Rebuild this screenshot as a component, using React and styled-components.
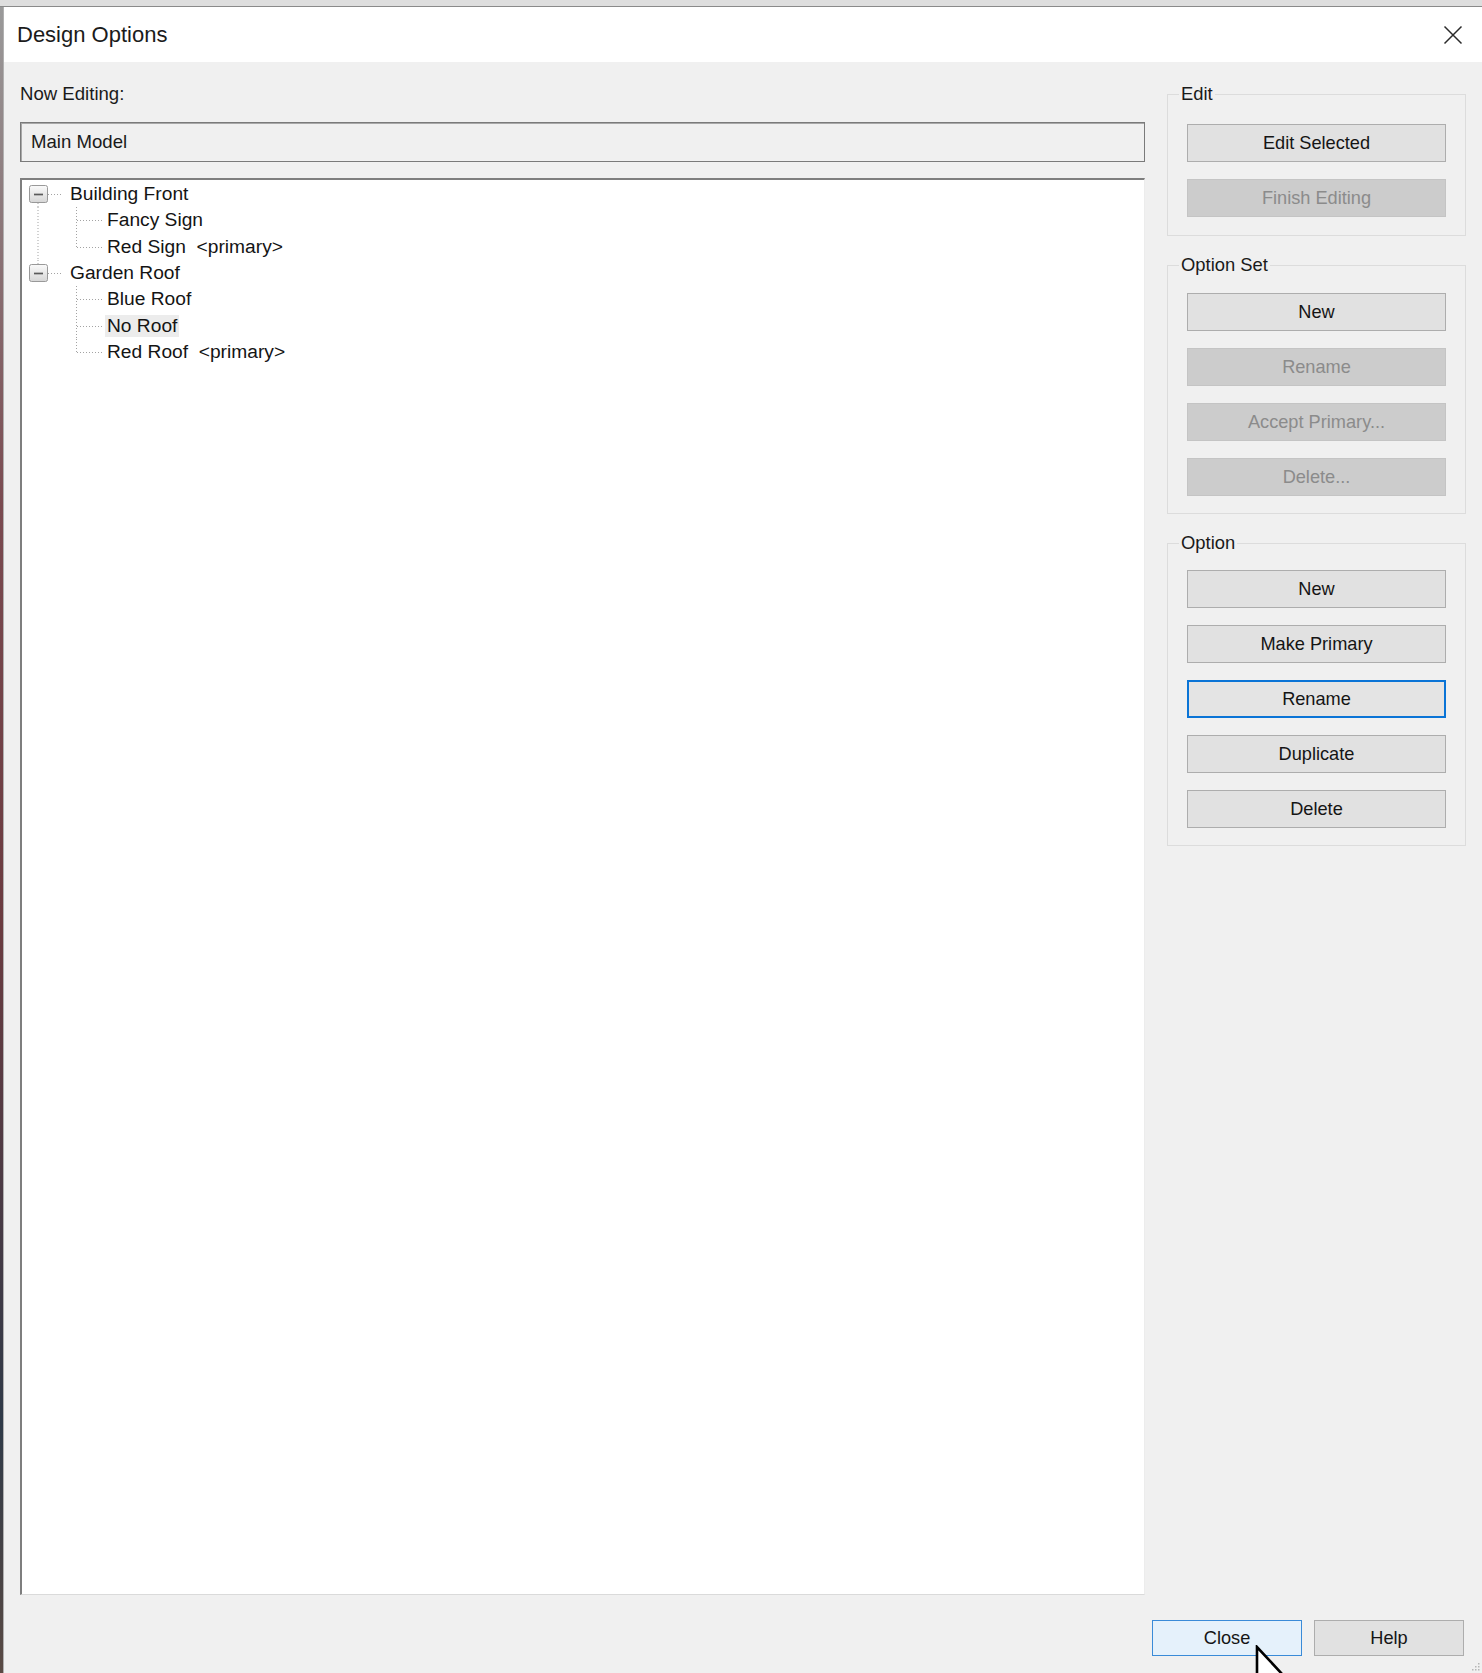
import React from "react";
import styled, { createGlobalStyle, css } from "styled-components";

const Global = createGlobalStyle`
  html, body { margin: 0; padding: 0; height: 100%; overflow: hidden; }
  body { font-family: "Segoe UI", "Liberation Sans", Arial, sans-serif; color: #111; }
  #root { height: 100%; }
`;

const Page = styled.div`
  position: relative;
  height: 100vh;
  display: flex;
  flex-direction: column;
  background: #dcdcdc;
  overflow: hidden;
`;

const TopStrip = styled.div`
  height: 6px;
  flex-shrink: 0;
  background: #dedede;
  border-bottom: 1px solid #8a8a8a;
`;

const Desk = styled.div`
  flex: 1;
  min-height: 0;
  display: flex;
`;

const LeftStrip = styled.div`
  width: 3px;
  flex-shrink: 0;
  background: linear-gradient(#9a9a9a 0%, #7a4a50 30%, #6b3b40 55%, #2f3a48 85%, #5a4a44 100%);
`;

const Window = styled.div`
  position: relative;
  flex: 1;
  min-width: 0;
  display: flex;
  flex-direction: column;
  background: #f0f0f0;
  border-left: 1px solid #b0b0b0;
`;

const TitleBar = styled.div`
  height: 55px;
  flex-shrink: 0;
  background: #fff;
  display: flex;
  align-items: center;
  justify-content: space-between;
  padding: 0 19px 0 13px;
`;

const Title = styled.div`
  font-size: 22px;
  color: #1b1b1b;
`;

const Body = styled.div`
  flex: 1;
  min-height: 0;
  display: grid;
  grid-template-columns: 1125px 299px;
  column-gap: 22px;
  padding: 21px 15px 0 16px;
`;

const LeftCol = styled.div`
  display: flex;
  flex-direction: column;
  min-height: 0;
`;

const FieldLabel = styled.div`
  font-size: 18.6px;
  line-height: 22px;
  color: #1a1a1a;
`;

const ReadOnlyBox = styled.div`
  margin-top: 17px;
  height: 40px;
  box-sizing: border-box;
  display: flex;
  align-items: center;
  padding-left: 10px;
  font-size: 18.6px;
  color: #1a1a1a;
  background: #f0f0f0;
  border: 1px solid #7a7a7a;
  box-shadow: inset 1px 1px 0 #a8a8a8;
`;

const TreeBox = styled.div`
  margin-top: 16px;
  flex: 1;
  min-height: 0;
  padding-top: 1px;
  background: #fff;
  border-top: 2px solid #7e7e7e;
  border-left: 2px solid #7e7e7e;
  border-right: 1px solid #ececec;
  border-bottom: 1px solid #dadada;
`;

const TreeRow = styled.div`
  height: 26.3px;
  display: flex;
  align-items: center;
`;

const Connector = styled.svg`
  flex-shrink: 0;
  display: block;
`;

const TreeLabel = styled.span`
  font-size: 19.2px;
  line-height: 22px;
  white-space: pre;
  color: #141414;
  padding: 0 2px;
  margin-left: -2px;
  background: ${(p) => (p.$selected ? "#ececec" : "transparent")};
`;

const RightCol = styled.div`
  display: flex;
  flex-direction: column;
  gap: 18px;
`;

const Group = styled.fieldset`
  margin: 0;
  min-width: 0;
  padding: ${(p) => p.$pt}px 19px ${(p) => p.$pb}px 19px;
  border: 1px solid #dcdcdc;
  display: flex;
  flex-direction: column;
  gap: 17px;
`;

const Legend = styled.legend`
  padding: 0 2px;
  margin-left: -8px;
  font-size: 18.4px;
  line-height: 22px;
  color: #1a1a1a;
`;

const Button = styled.button`
  height: 38px;
  box-sizing: border-box;
  padding: 0;
  font-family: inherit;
  font-size: 18.2px;
  color: #151515;
  background: #e1e1e1;
  border: 1px solid #adadad;
  ${(p) =>
    p.$disabled &&
    css`
      background: #cccccc;
      border-color: #c4c4c4;
      color: #8b8b8b;
    `}
  ${(p) =>
    p.$focused &&
    css`
      border: 2px solid #0a74d6;
      background: #e4e4e4;
    `}
  ${(p) =>
    p.$hover &&
    css`
      background: #e5f1fb;
      border-color: #3a8bd8;
    `}
`;

const Footer = styled.div`
  flex-shrink: 0;
  display: flex;
  justify-content: flex-end;
  gap: 12px;
  padding: 25px 18px 17px 0;
`;

const FooterButton = styled(Button)`
  width: 150px;
  height: 36px;
`;

const Grip = styled.svg`
  position: absolute;
  right: 1px;
  bottom: 1px;
`;

const Cursor = styled.svg`
  position: absolute;
  left: 1255px;
  top: 1645px;
`;

const DOT = { stroke: "#a3a3a3", strokeWidth: 1, strokeDasharray: "1 2" };

function RootConnector({ hasPrev, hasNext }) {
  return (
    <Connector width="48" height="26" viewBox="0 0 48 26">
      {hasPrev && <line x1="16" y1="0" x2="16" y2="4" {...DOT} />}
      {hasNext && <line x1="16" y1="22" x2="16" y2="26" {...DOT} />}
      <line x1="26" y1="13.5" x2="41" y2="13.5" {...DOT} />
      <defs>
        <linearGradient id="boxg" x1="0" y1="0" x2="0" y2="1">
          <stop offset="0" stopColor="#fafafa" />
          <stop offset="1" stopColor="#d6d6d6" />
        </linearGradient>
      </defs>
      <rect x="7.5" y="4.5" width="18" height="17" rx="2" fill="url(#boxg)" stroke="#999" />
      <line x1="12" y1="13.5" x2="21" y2="13.5" stroke="#5a5a5a" strokeWidth="1.7" />
    </Connector>
  );
}

function ChildConnector({ parentHasNext, last }) {
  return (
    <Connector width="85" height="26" viewBox="0 0 85 26">
      {parentHasNext && <line x1="16" y1="0" x2="16" y2="26.5" {...DOT} />}
      <line x1="54.5" y1="0" x2="54.5" y2={last ? 13.5 : 26.5} {...DOT} />
      <line x1="55" y1="13.5" x2="80" y2="13.5" {...DOT} />
    </Connector>
  );
}

const tree = [
  {
    name: "Building Front",
    children: [{ name: "Fancy Sign" }, { name: "Red Sign  <primary>" }],
  },
  {
    name: "Garden Roof",
    children: [
      { name: "Blue Roof" },
      { name: "No Roof", selected: true },
      { name: "Red Roof  <primary>" },
    ],
  },
];

const groups = [
  {
    title: "Edit",
    pt: 19,
    pb: 18,
    buttons: [{ label: "Edit Selected" }, { label: "Finish Editing", disabled: true }],
  },
  {
    title: "Option Set",
    pt: 17,
    pb: 17,
    buttons: [
      { label: "New" },
      { label: "Rename", disabled: true },
      { label: "Accept Primary...", disabled: true },
      { label: "Delete...", disabled: true },
    ],
  },
  {
    title: "Option",
    pt: 16,
    pb: 17,
    buttons: [
      { label: "New" },
      { label: "Make Primary" },
      { label: "Rename", focused: true },
      { label: "Duplicate" },
      { label: "Delete" },
    ],
  },
];

export default function App() {
  return (
    <>
      <Global />
      <Page>
        <TopStrip />
        <Desk>
          <LeftStrip />
          <Window>
            <TitleBar>
              <Title>Design Options</Title>
              <svg width="20" height="20" viewBox="0 0 20 20">
                <path d="M1.5 1.5 L18.5 18.5 M18.5 1.5 L1.5 18.5" stroke="#2a2a2a" strokeWidth="1.5" />
              </svg>
            </TitleBar>
            <Body>
              <LeftCol>
                <FieldLabel>Now Editing:</FieldLabel>
                <ReadOnlyBox>Main Model</ReadOnlyBox>
                <TreeBox>
                  {tree.map((node, i) => (
                    <React.Fragment key={node.name}>
                      <TreeRow>
                        <RootConnector hasPrev={i > 0} hasNext={i < tree.length - 1} />
                        <TreeLabel>{node.name}</TreeLabel>
                      </TreeRow>
                      {node.children.map((c, j) => (
                        <TreeRow key={c.name}>
                          <ChildConnector
                            parentHasNext={i < tree.length - 1}
                            last={j === node.children.length - 1}
                          />
                          <TreeLabel $selected={c.selected}>{c.name}</TreeLabel>
                        </TreeRow>
                      ))}
                    </React.Fragment>
                  ))}
                </TreeBox>
              </LeftCol>
              <RightCol>
                {groups.map((g) => (
                  <Group key={g.title} $pt={g.pt} $pb={g.pb}>
                    <Legend>{g.title}</Legend>
                    {g.buttons.map((b) => (
                      <Button key={b.label} $disabled={b.disabled} $focused={b.focused}>
                        {b.label}
                      </Button>
                    ))}
                  </Group>
                ))}
              </RightCol>
            </Body>
            <Footer>
              <FooterButton $hover>Close</FooterButton>
              <FooterButton>Help</FooterButton>
            </Footer>
            <Grip width="10" height="10" viewBox="0 0 10 10">
              <g fill="#b5b5b5">
                <rect x="7" y="1" width="1.5" height="1.5" />
                <rect x="4" y="4" width="1.5" height="1.5" />
                <rect x="7" y="4" width="1.5" height="1.5" />
                <rect x="1" y="7" width="1.5" height="1.5" />
                <rect x="4" y="7" width="1.5" height="1.5" />
                <rect x="7" y="7" width="1.5" height="1.5" />
              </g>
            </Grip>
          </Window>
        </Desk>
        <Cursor width="40" height="50" viewBox="0 0 40 50">
          <path
            d="M2 2 L2 40 L10.5 31.5 L17.5 47 L22.5 44.8 L15.5 29.5 L27.5 29.5 Z"
            fill="#fff"
            stroke="#000"
            strokeWidth="2.6"
            strokeLinejoin="miter"
          />
        </Cursor>
      </Page>
    </>
  );
}
